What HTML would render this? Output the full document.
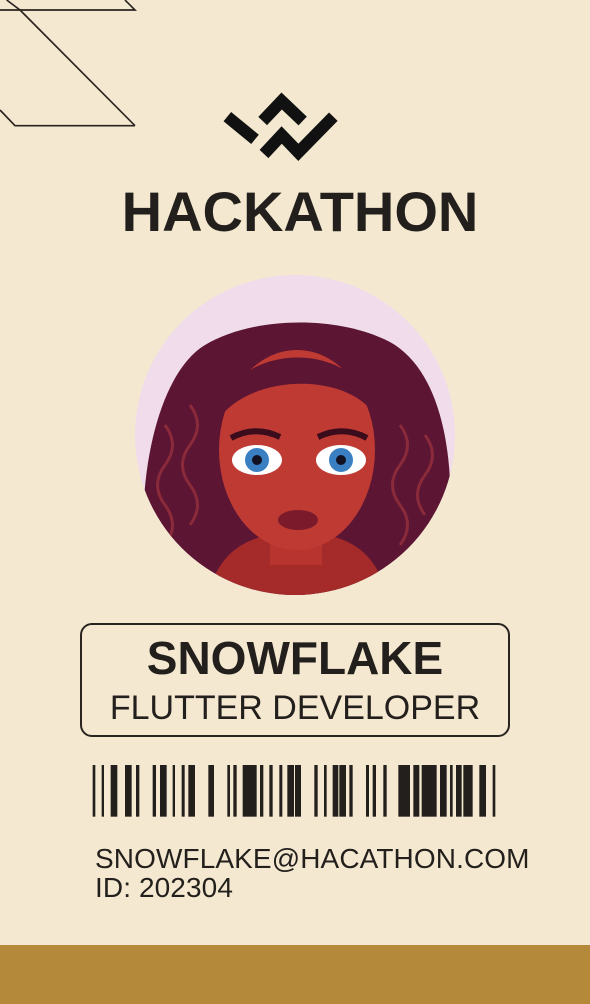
<!DOCTYPE html>
<html><head><meta charset="utf-8"><style>
body{margin:0;width:590px;height:1004px;background:#f4e9d0;position:relative;overflow:hidden;font-family:"Liberation Sans",sans-serif;color:#231f1c}
.abs{position:absolute}
</style></head><body>
<svg class="abs" style="left:0;top:0" width="340" height="170" viewBox="0 0 1020 510">
<g fill="none" stroke="#2a2420" stroke-width="5">
<polyline points="20,0 60,30 0,30"/><polyline points="375,0 405,30 60,30"/>
<line x1="60" y1="30" x2="405" y2="377"/>
<polyline points="0,330 45,377 405,377"/>
</g>
<g fill="none" stroke="#111" stroke-width="36" stroke-linejoin="miter">
<line x1="682" y1="350" x2="765" y2="418"/>
<polyline points="788,363 845,303 908,363"/>
<polyline points="792,462 845,405 895,457 1000,350"/>
</g>
</svg>
<div class="abs" style="left:0;width:600px;top:176px;text-align:center;font-weight:bold;font-size:56px;line-height:72px">HACKATHON</div>
<svg class="abs" style="left:135px;top:275px" width="320" height="320" viewBox="0 0 320 320">
<defs><clipPath id="c"><circle cx="160" cy="160" r="160"/></clipPath></defs>
<circle cx="160" cy="160" r="160" fill="#f0dcea"/>
<g clip-path="url(#c)">
<path d="M15,330 C-5,220 20,100 70,70 C120,40 210,40 260,70 C320,110 325,230 305,330 Z" fill="#5c1532"/>
<g fill="none" stroke="#8a2a3a" stroke-width="3">
<path d="M30,150 q15,20 0,40 q-15,20 0,40 q15,20 0,40"/><path d="M55,130 q15,20 0,40 q-15,20 0,40 q15,20 0,40"/>
<path d="M265,150 q15,20 0,40 q-15,20 0,40 q15,20 0,40"/><path d="M290,160 q15,20 0,40 q-15,20 0,40"/>
</g>
<path d="M70,330 C80,285 100,270 125,262 L200,262 C225,270 245,285 255,330 Z" fill="#a52a2a"/>
<rect x="135" y="230" width="52" height="60" fill="#b8352f"/>
<ellipse cx="162" cy="175" rx="78" ry="100" fill="#bf3a33"/>
<path d="M80,150 C90,60 235,60 245,150 C225,95 110,95 80,150Z" fill="#5c1532"/>
<ellipse cx="122" cy="185" rx="25" ry="15" fill="#fff"/><circle cx="122" cy="185" r="12" fill="#3a7fc1"/><circle cx="122" cy="185" r="5" fill="#112"/>
<ellipse cx="206" cy="185" rx="25" ry="15" fill="#fff"/><circle cx="206" cy="185" r="12" fill="#3a7fc1"/><circle cx="206" cy="185" r="5" fill="#112"/>
<path d="M96,163 Q120,150 145,162" stroke="#3a0c1c" stroke-width="6" fill="none"/>
<path d="M183,162 Q208,150 232,163" stroke="#3a0c1c" stroke-width="6" fill="none"/>
<ellipse cx="163" cy="245" rx="20" ry="10" fill="#7a1a2a"/>
</g>
</svg>
<div class="abs" style="left:80px;top:623px;width:426px;height:110px;border:2px solid #2a2420;border-radius:12px"></div>
<div class="abs" style="left:80px;width:430px;top:630px;text-align:center;font-weight:bold;font-size:46px;line-height:56px">SNOWFLAKE</div>
<div class="abs" style="left:80px;width:430px;top:686px;text-align:center;font-size:34px;line-height:44px">FLUTTER DEVELOPER</div>
<svg class="abs" style="left:80px;top:750px" width="430" height="80" viewBox="0 0 1290 240" fill="#231f1c">
<g transform="translate(0,45)">
<rect x="38" width="8" height="155"/><rect x="65" width="7" height="155"/><rect x="92" width="20" height="155"/><rect x="135" width="20" height="155"/><rect x="168" width="10" height="155"/><rect x="218" width="10" height="155"/><rect x="240" width="20" height="155"/><rect x="278" width="7" height="155"/><rect x="305" width="9" height="155"/><rect x="325" width="20" height="155"/><rect x="385" width="17" height="155"/><rect x="442" width="8" height="155"/><rect x="460" width="10" height="155"/><rect x="488" width="42" height="155"/><rect x="540" width="10" height="155"/><rect x="568" width="10" height="155"/><rect x="598" width="9" height="155"/><rect x="622" width="20" height="155"/><rect x="645" width="18" height="155"/><rect x="703" width="10" height="155"/><rect x="732" width="8" height="155"/><rect x="758" width="17" height="155"/><rect x="778" width="20" height="155"/><rect x="808" width="10" height="155"/><rect x="858" width="9" height="155"/><rect x="878" width="10" height="155"/><rect x="910" width="10" height="155"/><rect x="955" width="35" height="155"/><rect x="1000" width="18" height="155"/><rect x="1025" width="45" height="155"/><rect x="1080" width="20" height="155"/><rect x="1110" width="8" height="155"/><rect x="1128" width="17" height="155"/><rect x="1150" width="28" height="155"/><rect x="1198" width="20" height="155"/><rect x="1238" width="8" height="155"/>
</g></svg>
<div class="abs" style="left:95px;top:844px;font-size:28px;line-height:29px;letter-spacing:0.1px">SNOWFLAKE@HACATHON.COM<br>ID: 202304</div>
<div class="abs" style="left:0;top:945px;width:590px;height:59px;background:#b5893a"></div>
</body></html>
